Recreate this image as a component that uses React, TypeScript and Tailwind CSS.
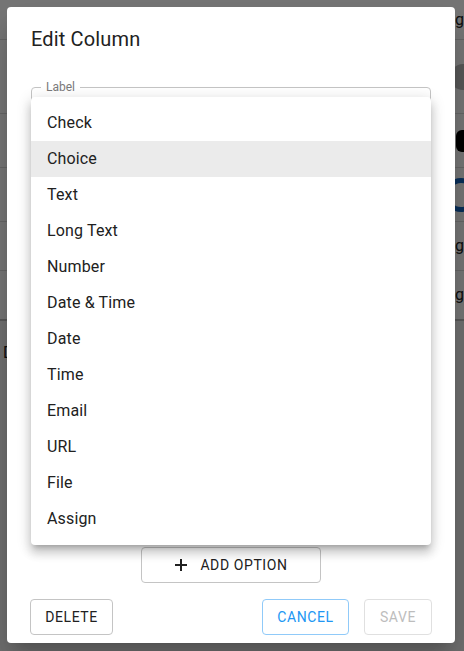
import React from "react";

const types = [
  "Check",
  "Choice",
  "Text",
  "Long Text",
  "Number",
  "Date & Time",
  "Date",
  "Time",
  "Email",
  "URL",
  "File",
  "Assign",
];

const Background: React.FC = () => {
  return (
    <div className="h-[651px] w-[464px] overflow-hidden bg-white">
      <div className="flex h-[40px] items-center justify-end border-b border-[#dcdcdc]">
        <span className="text-[16px] text-[#222]">ig</span>
      </div>
      <div className="flex h-[74px] items-center justify-end border-b border-[#dcdcdc]">
        <div className="-mr-[12px] h-[26px] w-[26px] rounded-full bg-[#bdbdbd]" />
      </div>
      <div className="flex h-[54px] items-center justify-end border-b border-[#dcdcdc]">
        <div className="-mr-[6px] h-[22px] w-[14px] rounded-[6px] bg-black" />
      </div>
      <div className="flex h-[54px] items-center justify-end border-b border-[#dcdcdc]">
        <div className="-mr-[14px] h-[34px] w-[34px] rounded-full border-[5px] border-[#1565c0]" />
      </div>
      <div className="flex h-[49px] items-center justify-end border-b border-[#dcdcdc]">
        <span className="text-[16px] text-[#222] underline decoration-dotted">ig</span>
      </div>
      <div className="flex h-[50px] items-center justify-end border-b-2 border-[#bdbdbd]">
        <span className="text-[16px] text-[#222] underline decoration-dotted">ig</span>
      </div>
      <div className="h-full bg-[#f2f2f2] px-[3px] pt-[20px]">
        <span className="text-[16px] text-[#222]">Details</span>
      </div>
    </div>
  );
};

export default function App() {
  return (
    <div
      className="relative h-[651px] w-[464px] overflow-hidden"
      style={{ fontFamily: "Roboto, 'Noto Sans', Arial, sans-serif" }}
    >
      <Background />
      <div className="absolute inset-0 bg-black/[0.54]" />

      {/* dialog */}
      <div className="absolute left-[7px] top-[7px] flex h-[636px] w-[448px] flex-col rounded-[4px] bg-white shadow-[0_11px_15px_-7px_rgba(0,0,0,0.2),0_24px_38px_3px_rgba(0,0,0,0.14)]">
        <h2 className="px-[24px] pt-[16px] text-[20px] font-normal leading-[32px] tracking-[0.15px] text-[#212121]">
          Edit Column
        </h2>
        <div className="relative mx-[24px] mt-[32px] h-[56px] rounded-[4px] border border-[#c4c4c4]">
          <span className="absolute -top-[9px] left-[9px] bg-white px-[5px] text-[12px] leading-[16px] text-[#7a7a7a]">
            Label
          </span>
        </div>
        <div className="flex-1" />
        <div className="flex justify-center">
          <button className="flex h-[36px] w-[180px] items-center justify-center gap-[12px] rounded-[4px] border border-[#c4c4c4] text-[14px] font-normal tracking-[0.6px] text-[#212121]">
            <svg width="14" height="14" viewBox="0 0 14 14">
              <path d="M7 1v12M1 7h12" stroke="#212121" strokeWidth="2" />
            </svg>
            ADD OPTION
          </button>
        </div>
        <div className="mt-[16px] mb-[8px] flex items-center px-[23px]">
          <button className="h-[36px] w-[83px] rounded-[4px] border border-[#c4c4c4] text-[14px] font-normal tracking-[0.6px] text-[#212121]">
            DELETE
          </button>
          <div className="flex-1" />
          <button className="h-[36px] w-[87px] rounded-[4px] border border-[#90caf9] text-[14px] font-normal tracking-[0.6px] text-[#2196f3]">
            CANCEL
          </button>
          <button className="ml-[15px] h-[36px] w-[68px] rounded-[4px] border border-[#e0e0e0] text-[14px] font-normal tracking-[0.6px] text-[#bdbdbd]">
            SAVE
          </button>
        </div>
      </div>

      {/* select menu */}
      <ul className="absolute left-[31px] top-[97px] w-[400px] rounded-[4px] bg-white py-[8px] shadow-[0_5px_5px_-3px_rgba(0,0,0,0.2),0_8px_10px_1px_rgba(0,0,0,0.14),0_3px_14px_2px_rgba(0,0,0,0.12)]">
        {types.map((t) => (
          <li
            key={t}
            className={`flex h-[36px] items-center px-[16px] text-[16px] tracking-[0.15px] text-[#212121] ${
              t === "Choice" ? "bg-[#ebebeb]" : ""
            }`}
          >
            {t}
          </li>
        ))}
      </ul>
    </div>
  );
}
